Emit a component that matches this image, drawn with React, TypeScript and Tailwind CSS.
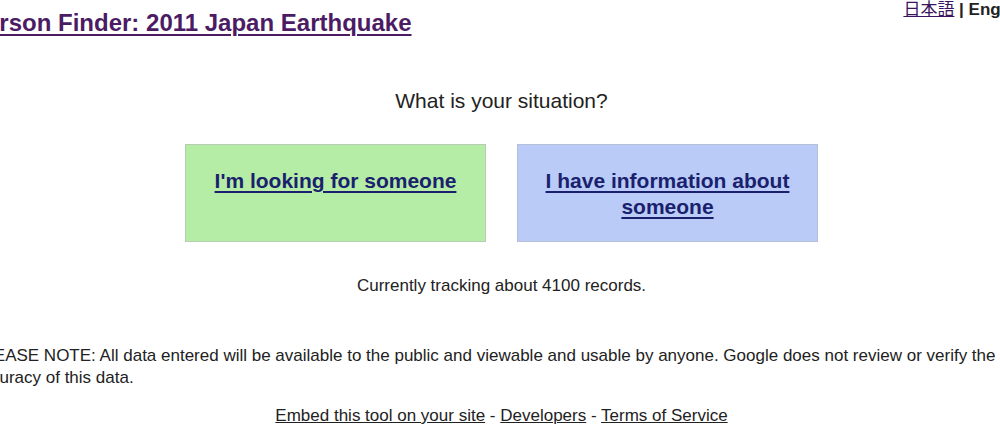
import React from "react";

export default function App() {
  return (
    <div className="w-[1000px] h-[428px] overflow-hidden bg-white" style={{ fontFamily: '"Liberation Sans", Arial, sans-serif' }}>
      <div className="ml-[-27px] w-[1057px] text-[#222]">
        <div className="flex justify-between items-start">
          <a href="#" className="ml-[-3px] pt-[9px] text-[24px] leading-[28px] font-bold text-[#4b1b63] underline decoration-[2px] underline-offset-[3px]">
            Person Finder: 2011 Japan Earthquake
          </a>
          <div className="text-[17px] leading-[20px] pr-0 text-[#222]" style={{ fontFamily: '"Liberation Sans", "Noto Sans CJK JP", sans-serif' }}>
            <a href="#" className="text-[#3b1460] underline">日本語</a>
            <span className="font-bold"> | English</span>
          </div>
        </div>

        <div className="mt-[52px] text-center text-[21px] leading-[24px] text-[#222]">What is your situation?</div>

        <div className="mt-[31px] flex justify-center gap-[31px]">
          <div className="w-[301px] h-[98px] bg-[#b6eda6] border border-[#b9cbb4] pt-[23px] px-3 text-center text-[21px] leading-[26px]">
            <a href="#" className="text-[21px] leading-[26px] font-bold text-[#1a1f6e] underline decoration-[2px] underline-offset-[3px]">
              I'm looking for someone
            </a>
          </div>
          <div className="w-[301px] h-[98px] bg-[#b9cbf6] border border-[#b6bfd8] pt-[23px] px-3 text-center text-[21px] leading-[26px]">
            <a href="#" className="text-[21px] leading-[26px] font-bold text-[#1a1f6e] underline decoration-[2px] underline-offset-[3px]">
              I have information about someone
            </a>
          </div>
        </div>

        <div className="mt-[34px] text-center text-[17px] leading-[20px] text-[#222]">
          Currently tracking about 4100 records.
        </div>

        <div className="mt-[49px] text-[17px] leading-[22px] text-[#222]">
          PLEASE NOTE: All data entered will be available to the public and viewable and usable by anyone. Google does not review or verify the accuracy of this data.
        </div>

        <div className="mt-[17px] text-center text-[17px] leading-[20px] text-[#222]">
          <a href="#" className="underline">Embed this tool on your site</a>
          {" - "}
          <a href="#" className="underline">Developers</a>
          {" - "}
          <a href="#" className="underline">Terms of Service</a>
        </div>
      </div>
    </div>
  );
}
